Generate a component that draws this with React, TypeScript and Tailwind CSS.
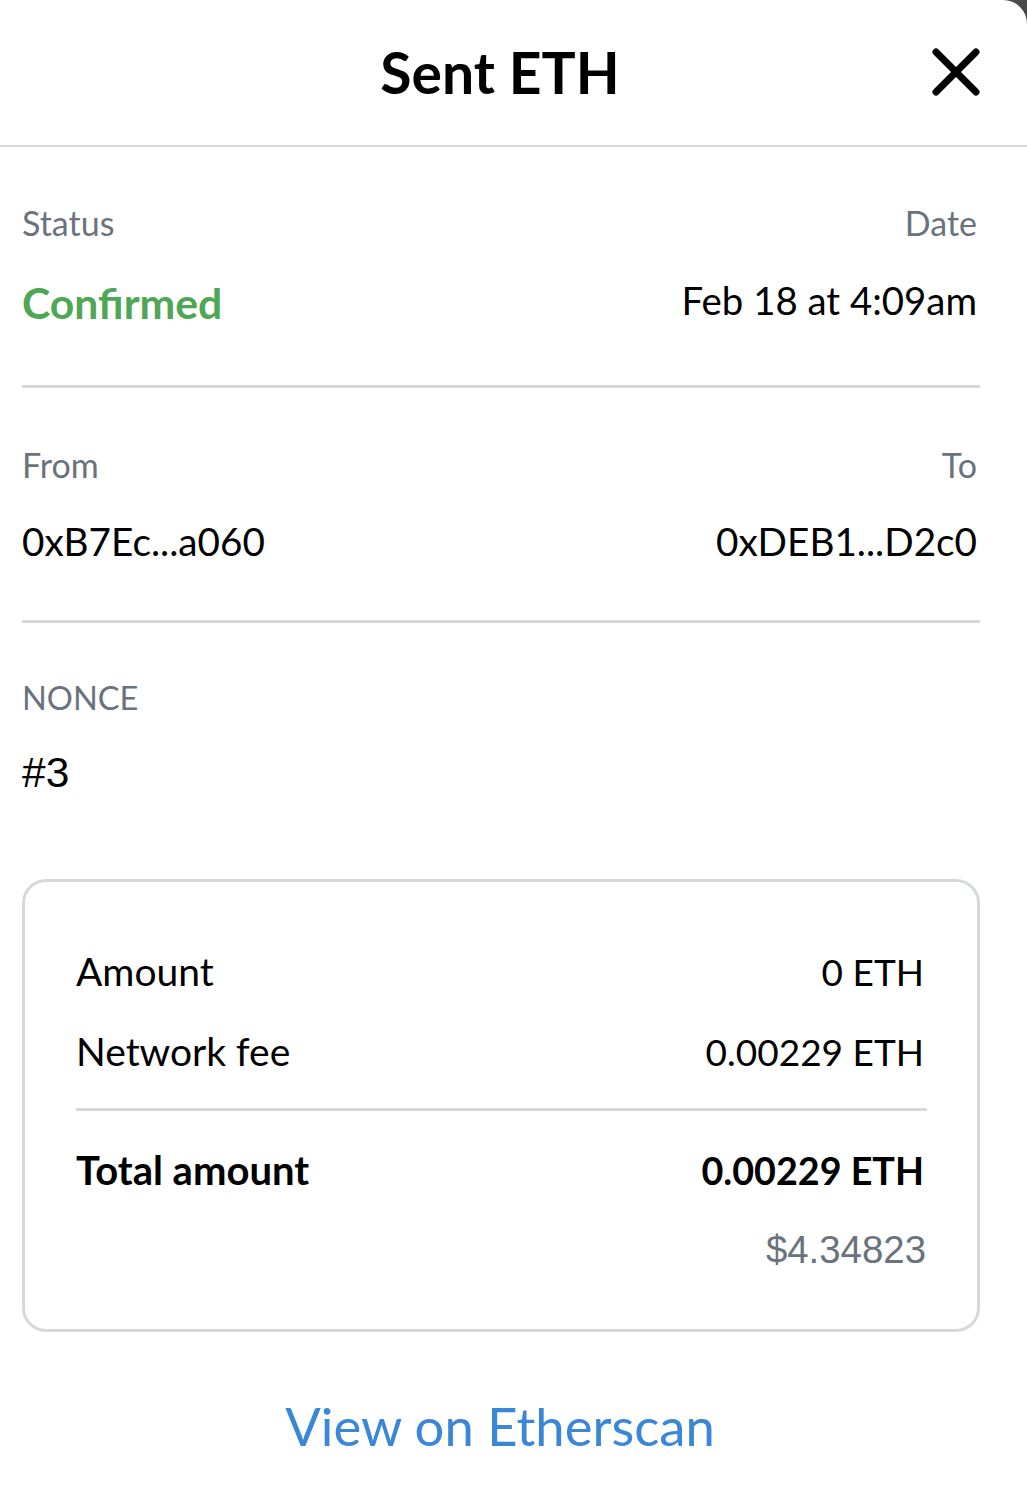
import React from "react";

const font = { fontFamily: "Lato, 'Liberation Sans', sans-serif" };
const helv = { fontFamily: "'Liberation Sans', Arial, sans-serif" };

function Label({ children, right }: { children: React.ReactNode; right?: boolean }) {
  return (
    <div className={`text-[34px] leading-none text-[#6a737d] ${right ? "text-right" : ""}`}>
      {children}
    </div>
  );
}

export default function App() {
  return (
    <div className="min-h-[1506px] w-[1027px] bg-[#4a4a4a]" style={font}>
      <div className="min-h-[1506px] w-[1027px] overflow-hidden rounded-tr-[24px] bg-white text-black">
        {/* Header */}
        <div className="relative flex h-[147px] items-center justify-center border-b-2 border-[#d6d9dc] pr-[27px]">
          <h1 className="text-[57px] font-bold leading-none">Sent ETH</h1>
          <button type="button" className="absolute right-[47px] top-[48px] flex h-[48px] w-[48px] items-center justify-center">
            <svg viewBox="0 0 48 48" className="h-[48px] w-[48px]">
              <path d="M4 4 L44 44 M44 4 L4 44" stroke="black" strokeWidth="7" strokeLinecap="round" />
            </svg>
          </button>
        </div>

        <div className="pl-[22px] pr-[47px]">
          {/* Status / Date */}
          <div className="flex justify-between border-b-[3px] border-[#d6d9dc] pb-[60px] pt-[59px]">
            <div>
              <Label>Status</Label>
              <div className="mt-[42px] text-[42.7px] font-bold leading-none text-[#4ea755]">Confirmed</div>
            </div>
            <div className="mr-[3px] text-right">
              <Label right>Date</Label>
              <div className="mt-[41px] text-[38.4px] leading-none">Feb 18 at 4:09am</div>
            </div>
          </div>

          {/* From / To */}
          <div className="flex justify-between border-b-[3px] border-[#d6d9dc] pb-[60px] pt-[60px]">
            <div>
              <Label>From</Label>
              <div className="mt-[40px] text-[38.7px] leading-none">0xB7Ec...a060</div>
            </div>
            <div className="mr-[3px] text-right">
              <Label right>To</Label>
              <div className="mt-[40px] text-[38.7px] leading-none">0xDEB1...D2c0</div>
            </div>
          </div>

          {/* Nonce */}
          <div className="pt-[59px]">
            <div className="text-[32.6px] leading-none text-[#6a737d]">NONCE</div>
            <div className="mt-[37px] text-[42.5px] leading-none" style={helv}>
              #3
            </div>
          </div>

          {/* Summary box */}
          <div className="mt-[84px] rounded-[24px] border-[3px] border-[#d6d9dc] pb-[60px] pl-[51px] pr-[50px] pt-[70px]">
            <div className="flex items-baseline justify-between pr-[3px] leading-none">
              <span className="text-[39px]">Amount</span>
              <span className="text-[37px]">0 ETH</span>
            </div>
            <div className="mt-[41px] flex items-baseline justify-between pr-[3px] leading-none">
              <span className="text-[39px]">Network fee</span>
              <span className="text-[37px]">0.00229 ETH</span>
            </div>
            <div className="mt-[37px] border-t-[3px] border-[#d6d9dc]" />
            <div className="mt-[39px] flex items-baseline justify-between pr-[3px] font-bold leading-none">
              <span className="text-[40px]">Total amount</span>
              <span className="text-[37.7px]">0.00229 ETH</span>
            </div>
            <div className="mt-[41px] pr-[1px] text-right text-[38.4px] leading-none text-[#6a737d]" style={helv}>
              $4.34823
            </div>
          </div>

          {/* Link */}
          <div className="mt-[68px] flex justify-center pr-[2px]">
            <a href="#" className="text-[52.6px] leading-none text-[#3a86d9]">
              View on Etherscan
            </a>
          </div>
        </div>
      </div>
    </div>
  );
}
